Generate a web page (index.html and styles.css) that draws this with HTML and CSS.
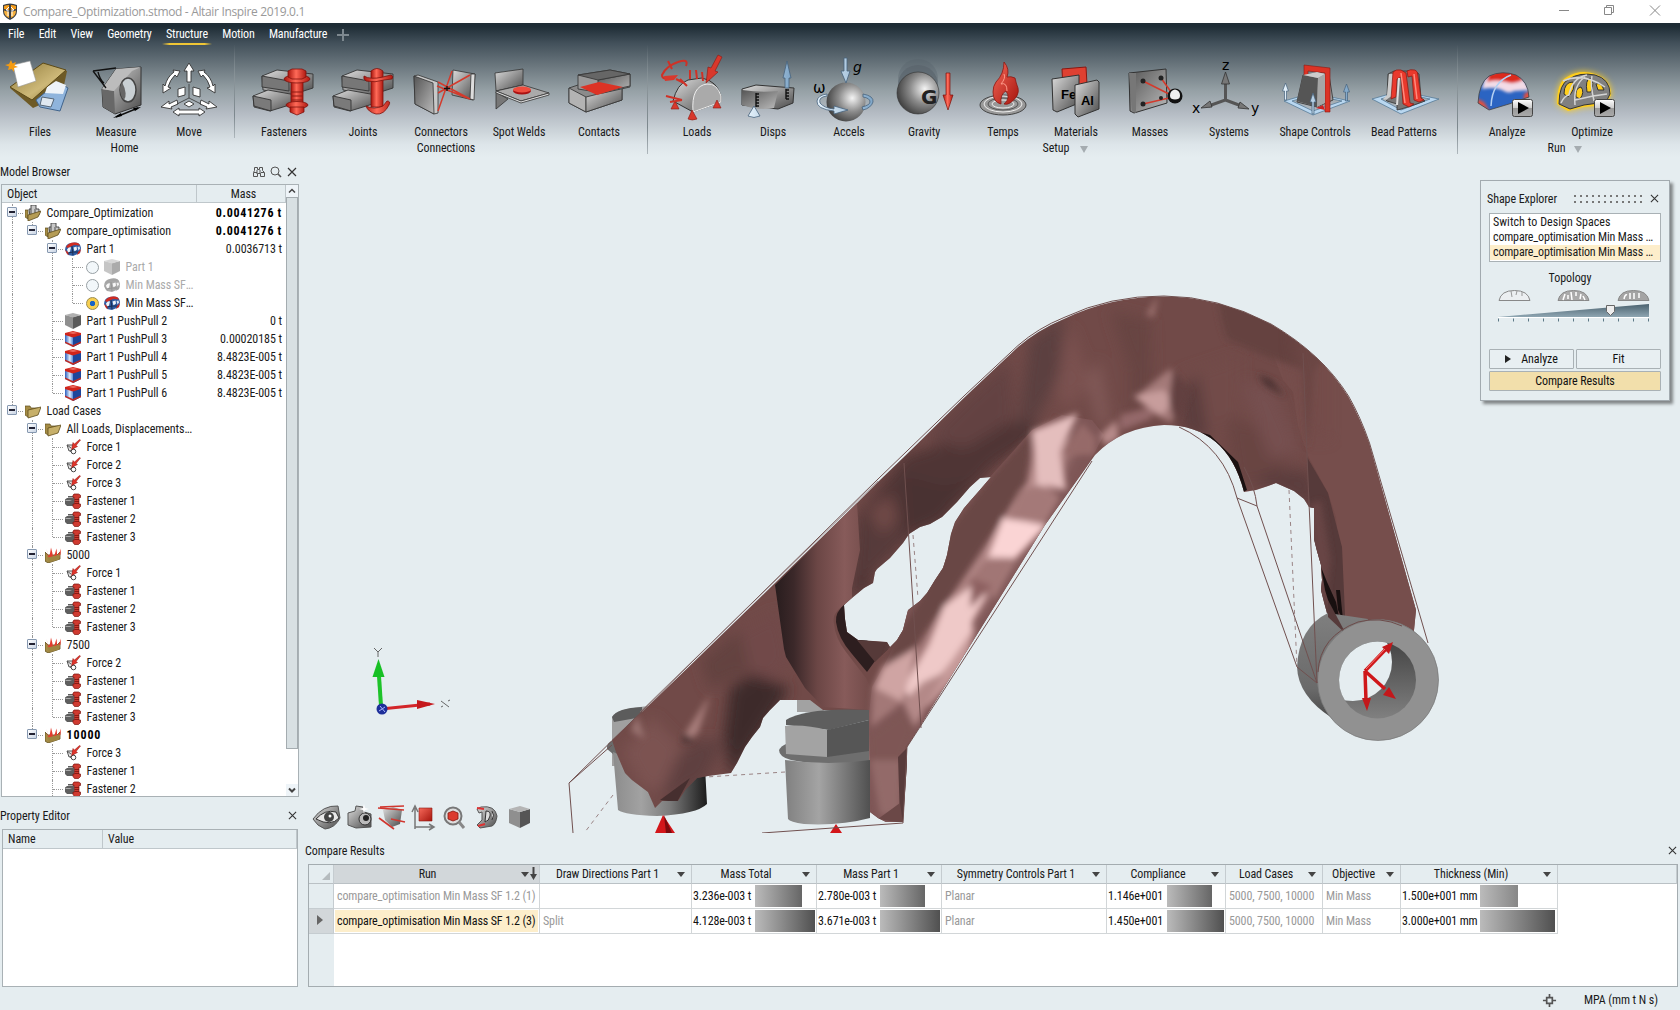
FILE: index.html
```
<!DOCTYPE html>
<html lang="en">
<head>
<meta charset="utf-8">
<title>Compare_Optimization.stmod - Altair Inspire 2019.0.1</title>
<link rel="stylesheet" href="styles.css">
</head>
<body>
<svg class="defs" width="0" height="0" aria-hidden="true">
  <defs>
    <linearGradient id="metal" x1="0" y1="0" x2="1" y2="1"><stop offset="0" stop-color="#ddd"/><stop offset="1" stop-color="#4a4a4a"/></linearGradient>
    <linearGradient id="metal3" x1="0" y1="0" x2="1" y2="1"><stop offset="0" stop-color="#555"/><stop offset="1" stop-color="#bbb"/></linearGradient>
    <linearGradient id="red" x1="0" y1="0" x2="1" y2="0"><stop offset="0" stop-color="#a8140c"/><stop offset=".45" stop-color="#ff6a58"/><stop offset="1" stop-color="#b01a12"/></linearGradient>
    <linearGradient id="redd" x1="0" y1="0" x2="1" y2="1"><stop offset="0" stop-color="#f7695a"/><stop offset="1" stop-color="#a6150d"/></linearGradient>
    <linearGradient id="ice" x1="0" y1="0" x2="1" y2="0"><stop offset="0" stop-color="#e6f2fb"/><stop offset="1" stop-color="#7fa6c8"/></linearGradient>
    <linearGradient id="tan" x1="0" y1="0" x2="1" y2="1"><stop offset="0" stop-color="#8f7a3a"/><stop offset=".6" stop-color="#cdb878"/><stop offset="1" stop-color="#8a7232"/></linearGradient>
    <linearGradient id="play" x1="0" y1="0" x2="0" y2="1"><stop offset="0" stop-color="#fff"/><stop offset=".5" stop-color="#ccc"/><stop offset=".5" stop-color="#999"/><stop offset="1" stop-color="#aaa"/></linearGradient>
    <radialGradient id="ball" cx=".66" cy=".4" r=".7"><stop offset="0" stop-color="#f4f4f4"/><stop offset=".5" stop-color="#8c8c8c"/><stop offset="1" stop-color="#3c3c3c"/></radialGradient>
    <linearGradient id="shieldblue" x1="0" y1="0" x2="1" y2="0"><stop offset="0" stop-color="#2a5fc0"/><stop offset=".3" stop-color="#dfeaf8"/><stop offset=".5" stop-color="#5a8bd8"/><stop offset="1" stop-color="#173f93"/></linearGradient>
    <symbol id="i-cube" viewBox="0 0 16 16"><path d="M0 2 8 4v12l-8-4z" fill="#8f8f8f"/><path d="m16 2-8 2v12l8-4z" fill="#5a5a5a"/><path d="M0 2 8 0l8 2-8 2.400z" fill="#b0b0b0"/></symbol>
    <symbol id="i-shield" viewBox="0 0 16 16"><path d="M0 2 8 4l8-2v10l-8 4-8-4z" fill="url(#shieldblue)"/><path d="M8 5l8-2v9l-8 4z" fill="#1c469b"/><path d="M0 2 8 0l8 2v2L8 6.500 0 4z" fill="#d0241a"/><path d="M3 2 8 .8 13 2 8 3z" fill="#ea6a5e"/><path d="M0 10.500 8 14l8-3.500V12l-8 4-8-4z" fill="#c02a22"/></symbol>
    <symbol id="i-opt" viewBox="0 0 16 16"><path d="M0 9Q0 3 6 2q9-2 10 5l-1 5-7 3-5-1z" fill="#2f5ca3"/><path d="M1 6Q4 1 10 1.500q4 0 5 3L9 4 3 7z" fill="#cf2b22"/><path d="M2 8.500q2-3 4-2l-1 4-2 1.500zM8.500 6.500l3-1 .5 3-2.500 2z" fill="#eef3f9"/><path d="M12.500 6l2-.5.5 2-1.500 2z" fill="#dce6f2"/><path d="M0 9l3 2 1 3-2-1zM13 11l3-3-1 4-3 2z" fill="#c62820"/><path d="m7 5 1 9M3 12l5-1 5 0" stroke="#1b2f55" fill="none"/></symbol>
    <symbol id="i-folder" viewBox="0 0 16 16"><path d="M0 3h5l1 2h7v3L3 14 0 12z" fill="#a58c45" stroke="#5e4d1c" stroke-width=".7"/><path d="M3 7 16 4l-3 8-10 3z" fill="#c7b06a" stroke="#5e4d1c" stroke-width=".8"/></symbol>
    <symbol id="i-asm" viewBox="0 0 16 16"><path d="M0 5h3v9L0 12z" fill="#a58c45" stroke="#5e4d1c" stroke-width=".7"/><path d="M4 4h2V0h5v4h3v6l-9 2z" fill="#c8c8c8" stroke="#3b3b3b" stroke-width=".9"/><path d="M6 4v6M10 4v5" stroke="#444" fill="none" stroke-width=".9"/><path d="M3 10 16 6l-3 6-10 4z" fill="#b59c55" stroke="#5e4d1c" stroke-width=".8"/></symbol>
    <symbol id="i-force" viewBox="0 0 16 16"><path d="M2 6h6l1 5-5 1zM2 6l4 3M5 12l3 2" stroke="#555" fill="#e4e4e4"/><circle cx="8.500" cy="12.500" r="2.300" fill="#fff" stroke="#444"/><path d="m14.500.5-5 4.500-1.500-1.500-1.500 7 6-3-1.500-1 4.500-5.500z" fill="#e0352b" stroke="#8f1510" stroke-width=".5"/></symbol>
    <symbol id="i-fast" viewBox="0 0 16 16"><path d="M3 3h6v10H3zM0 6.500l2-1.500h6v7l-6 1-2-2z" fill="#5e5e5e"/><path d="M0 7h5l2 1H1zM3 4h6v1H3z" fill="#aaa"/><path d="M9 1h4.500l2 1.200v2.300H14V11h1.500v2.500L13.500 15.500h-4L8 13.500V11h1.500V4.500H8V2.200z" fill="#cf3a30" stroke="#79120d" stroke-width=".7"/><path d="M9.500 6.500h4.500M9.500 8.500h4.500M9.500 10.500h4.500" stroke="#79120d" stroke-width=".8"/></symbol>
    <symbol id="i-case" viewBox="0 0 16 16"><path d="M0 5v9l3 2 12-4V5l-3 3H3z" fill="#a58c45" stroke="#5e4d1c" stroke-width=".8"/><path d="M1 1.500l1.500 4 .5 6 2-5 1-6 1.500 6 .5 4 2-4 1.500-5 .5 5 0 3 2.500-4 1.500-4-.5 6-2.500 4-4 2-4-.5z" fill="#e23b2e"/><path d="m3 10.500 12-3-1 5-10 3z" fill="#9d8542"/></symbol>
  </defs>
</svg>

<header class="titlebar">
  <svg class="app-logo" viewBox="0 0 16 17"><path d="M1 2q7-3 14 0v6q0 6-7 9-7-3-7-9z" fill="#3a3f44"/><path d="M2 3q2-1 5-1v5L2 6zM9 2q3 0 5 1v3L9 7z" fill="#f59c1a"/><path d="M2 7.500 7 9v6q-5-2-5-7.500zM14 7.500 9 9v6q5-2 5-7.500z" fill="#f7b13c"/><path d="M7 4 4 7h2v6M9 4l3 3h-2v6" fill="none" stroke="#fff" stroke-width="1"/></svg>
  <span class="window-title">Compare_Optimization.stmod - Altair Inspire 2019.0.1</span>
  <svg class="window-buttons" viewBox="0 0 120 16"><path d="M2 8.500h10M47.500 5.500h7v7h-7zM49.500 5V3.500h7v7H55M93 3.500l10 10m0-10-10 10" fill="none" stroke="#888"/></svg>
</header>

<section class="ribbon">
  <nav class="menu">
    <span>File</span><span>Edit</span><span>View</span><span>Geometry</span><span class="active">Structure</span><span>Motion</span><span>Manufacture</span>
    <svg class="plus" viewBox="0 0 12 12"><path d="M6 0v12M0 6h12" stroke="#7d888f" stroke-width="2"/></svg>
  </nav>
  <div class="groups">
    <div class="group home">
      <div class="tools">
        <div class="tool"><svg viewBox="4 54 72 70"><path d="m10 88 33-25 24 8-5 24-29 13z" fill="#6e5a26"/><path d="m36 100 22-18 10 6-8 23-20-4z" fill="#8fb4dc" stroke="#41648c"/><path d="m47 87 9-6 10 4-3 9-18-1z" fill="#eef3f8"/><path d="m42 97 12 2-3 8-11-2z" fill="#dfe8f1" stroke="#567"/><path d="m10 87 33-24 23 7-34 30z" fill="url(#tan)" stroke="#5c4a18"/><path d="m13 65 17-4 6 20-18 6z" fill="#fff" stroke="#999" stroke-width=".6"/><path d="m11 60 1.500 3.500L16 62l-1.500 3.500L18 67l-4 1 0 4-2.500-3L8 70l1-3.500L5 65l4-1z" fill="#f49b12"/></svg><span>Files</span></div>
        <div class="tool"><svg viewBox="80 54 72 70"><path d="m102 89 14-20 25-2v38l-26 9-12-7z" fill="url(#metal)" stroke="#333"/><path d="m102 89 12 2 1 23-12-7z" fill="#686868"/><path d="m116 69 25-2-9 4-18 20-12-2z" fill="#bcbcbc"/><ellipse cx="128" cy="90" rx="8" ry="12" fill="#c9d0d4" stroke="#444" stroke-width="1.500"/><path d="M122 82q-5 9 2 18 4-6-2-18" fill="#666"/><path d="M93 71l23-3M93 71l13 17M98 72q2 8 6 11" fill="none" stroke="#111" stroke-width="1.300"/><path d="m116 117 22-9" stroke="#111" stroke-width="1.400"/><path d="m113 118 8-5 1 3zM141 107l-8 1 2 3z"/></svg><span>Measure</span></div>
        <div class="tool"><svg viewBox="153 54 72 70"><g fill="#fff" stroke="#333" stroke-width=".9" stroke-linejoin="round"><path d="m189 63 5 8h-3v11h-4V71h-3z"/><path d="m163 93 0-9 2 2q2-9 9-14l-1-2 7 1-3 6-2-2q-5 5-7 12l3 1zM215 93l0-9-2 2q-2-9-9-14l1-2-7 1 3 6 2-2q5 5 7 12l-3 1z"/><path d="m161 107 8-6 0 3 8-4 1 4-7 3 1 2zM217 107l-8-6 0 3-8-4-1 4 7 3-1 2z"/><path d="m173 112 6-4v2h20v-2l6 4-6 4v-2h-20v2z"/><path d="m178 89 7-2v8l-7 2zM193 87l7 2v8l-7-2zM184 104l5-3 5 3-5 3z"/></g><path d="M189 84v14l-12 6M189 98l12 6" fill="none" stroke="#333" stroke-width=".8"/></svg><span>Move</span></div>
      </div>
      <div class="group-name">Home</div>
    </div>
    <div class="group connections">
      <div class="tools">
        <div class="tool"><svg viewBox="248 54 72 70"><g stroke="#333" stroke-width=".9"><path d="m262 76 15-6 36 4v14l-22 7-28-5z" fill="url(#metal)"/><path d="m262 76 27 5v10l-27-4z" fill="#777"/><path d="m253 96 15-6 28 5v8l-26 8-16-4z" fill="url(#metal)"/><path d="m253 96 18 4v11l-17-5z" fill="#7a7a7a"/></g><g fill="url(#red)" stroke="#7e120c" stroke-width=".8"><path d="M291 80h12v28h-12z"/><ellipse cx="297" cy="79" rx="13" ry="4"/><path d="M288 71l4-2h10l4 2v6l-4 2h-10l-4-2z"/><ellipse cx="297" cy="105" rx="11" ry="3.500"/><path d="M290 107h14v5l-7 3-7-3z"/></g><path d="M291 92h12M291 96h12M291 100h12" stroke="#8d1a13"/></svg><span>Fasteners</span></div>
        <div class="tool"><svg viewBox="327 54 72 70"><g stroke="#333" stroke-width=".9"><path d="m342 76 15-6 36 4v14l-22 7-28-5z" fill="url(#metal)"/><path d="m342 76 27 5v10l-27-4z" fill="#777"/><path d="m333 96 15-6 28 5v8l-26 8-16-4z" fill="url(#metal)"/><path d="m333 96 18 4v11l-17-5z" fill="#7a7a7a"/></g><g fill="url(#red)" stroke="#7e120c" stroke-width=".8"><path d="M371 71q6-5 12 0v36h-12z"/><path d="M364 76q6 4 19 1l8-2q3 1 1 4l-8 1q-9 3-18 1-3-2-2-5zM366 106q8 4 17 0l4-5q4 0 2 4-5 10-13 9-8-2-10-8z"/></g></svg><span>Joints</span></div>
        <div class="tool"><svg viewBox="405 54 72 70"><g stroke="#333" stroke-width=".8"><path d="m414 76 4-1 20 7v31l-4 1-19-10z" fill="#c8c8c8"/><path d="m414 76 19 7 1 31-19-10z" fill="url(#metal3)"/><path d="m453 70 22 4-2 26-21-5z" fill="url(#metal)"/><path d="m471 74 4 0-1 26-4-1z" fill="#ddd"/></g><path d="m438 82 32 17M438 93l32-18M438 111l14-40M437 86l33 13" stroke="#d43a2c" stroke-width="1.500"/><path d="M447 86v5M444 88.500h6" stroke="#111" stroke-width="1.300"/></svg><span>Connectors</span></div>
        <div class="tool"><svg viewBox="483 54 72 70"><g stroke="#333" stroke-width=".8"><path d="m496 92 12 7-12 10z" fill="#777"/><path d="m495 73 28-4v16l-27 6z" fill="url(#metal)"/><path d="m496 91 27-6 26 8-28 8z" fill="#aaa"/><path d="m496 91 25 10 28-8v2l-28 8-25-10z" fill="#e0e0e0"/></g><ellipse cx="522" cy="91" rx="9" ry="3.500" fill="#a11"/><ellipse cx="522" cy="89.500" rx="9" ry="3" fill="#ee4d3e"/></svg><span>Spot Welds</span></div>
        <div class="tool"><svg viewBox="563 54 72 70"><g stroke="#3a3a3a" stroke-width=".9"><path d="m569 88 12-4 41 4v12l-36 12-17-9z" fill="#8b8b8b"/><path d="m569 88 17 9v15l-17-9z" fill="#b3b3b3"/><path d="m586 97 36-9v12l-36 12z" fill="url(#metal)"/><path d="m578 75 32-5 20 4v13l-27 6-25-4z" fill="#999"/><path d="m598 80 32-6v12l-32 7z" fill="url(#metal3)"/><path d="m578 75 32-5 20 4-32 6z" fill="#666"/></g><path d="m580 87 19-5 24 5-26 8z" fill="#dc3325"/></svg><span>Contacts</span></div>
      </div>
      <div class="group-name">Connections</div>
    </div>
    <div class="group setup">
      <div class="tools">
        <div class="tool"><svg viewBox="661 54 72 70"><path d="m673 101q4-17 15-21l14-2q15 3 19 18v6l-28 10z" fill="url(#metal)" stroke="#333"/><path d="m693 112q-2-26 14-28 10-1 14 12v6z" fill="#aaa" stroke="#eee"/><g fill="#d8382c" stroke="#8a1710" stroke-width=".6"><path d="m718 55 4 2-7 14 3 1-12 11 2-16 3 1zM692 110l5 9q-5 2-9 0zM675 101l4 8h-8zM717 100l4 8h-8z"/></g><g fill="none" stroke="#cf3126" stroke-width="2"><path d="M686 66q3-8-8-4-12 4-16 13 0 6 12 2M668 61l4 8M676 79l8 4M680 79l7 7M690 70v9M696 70l1 9M702 72l1 9M666 96l16 4M670 102l12-2"/></g><path d="m664 76 14-1-4 5-9 1z" fill="#d8382c"/></svg><span>Loads</span></div>
        <div class="tool"><svg viewBox="737 54 72 70"><path d="m742 89 14-4 38 3-1 15-15 6-36-4z" fill="url(#metal)" stroke="#333"/><path d="M742 90q20 3 36 1l-4 17q-15 3-32-3z" fill="url(#metal3)"/><path d="M756 93v14m0-13h3m-3 3h3m-3 3h3m-3 3h3m-3 3h3M786 89v10m0-9h3m-3 3h3m-3 3h3m-3 3h3" stroke="#111" stroke-width="1.400"/><path d="m787 61 4 17h-2v10h-4V78h-2zM754 106l6 10q-6 3-12 0z" fill="url(#ice)" stroke="#46627c" stroke-width=".8"/></svg><span>Disps</span></div>
        <div class="tool"><svg viewBox="813 54 72 70"><circle cx="846" cy="102" r="19.500" fill="url(#ball)"/><path d="M844 58h3v13h3l-4 12-5-12h3zM827 96q-9 1-7 7 4 5 14 6v-3l14 4-14 4v-3q-18-2-17-10 1-6 10-7zM863 94q11 2 10 8-2 6-10 8l-1-3q8-2 8-5 0-4-7-5z" fill="url(#ice)" stroke="#46627c" stroke-width=".8"/><text class="greek" x="813" y="93">ω</text><text class="grav" x="853" y="72">g</text></svg><span>Accels</span></div>
        <div class="tool"><svg viewBox="888 54 72 70"><ellipse cx="918" cy="79" rx="20" ry="20" fill="#55626a" opacity=".35"/><ellipse cx="918" cy="85" rx="20" ry="20" fill="#59636a" opacity=".6"/><circle cx="918" cy="93" r="21" fill="url(#ball)" stroke="#333" stroke-width=".6"/><text class="gee" x="921" y="104">G</text><path d="M946 73h4v22h3l-5 15-5-15h3z" fill="url(#red)" stroke="#7e120c" stroke-width=".7"/></svg><span>Gravity</span></div>
        <div class="tool"><svg viewBox="967 54 72 70"><ellipse cx="1003" cy="105" rx="23" ry="10" fill="#999" stroke="#444"/><g fill="none" stroke="#eee"><ellipse cx="1003" cy="104" rx="19" ry="8"/><ellipse cx="1003" cy="104" rx="15" ry="6" stroke="#555"/><ellipse cx="1003" cy="104" rx="11" ry="4"/></g><path d="M1004 62q6 7 3 15 4-1 8 1 1 5 3 10 2 8-8 15-3 2-6 1 7-6 2-13-6 3-5 13-8-2-8-12 0-6 3-10 8-8 8-20z" fill="url(#redd)" stroke="#8a1710" stroke-width=".8"/><path d="M1004 74q2 4-3 10 6-2 6 7" fill="none" stroke="#ff9c8c"/></svg><span>Temps</span></div>
        <div class="tool"><svg viewBox="1040 54 72 70"><path d="m1062 69 24-2 1 17-24 6z" fill="#df4031" stroke="#8a1710"/><path d="m1052 79 27-4v28l-22 9-4-2z" fill="url(#metal)" stroke="#333"/><text class="elem" x="1061" y="99">Fe</text><path d="m1075 85 22-5 2 2v27l-21 8-3-3z" fill="url(#metal)" stroke="#333"/><text class="elem" x="1081" y="105">Al</text></svg><span>Materials</span></div>
        <div class="tool"><svg viewBox="1114 54 72 70"><path d="m1129 73 37-4 1 34-33 10-4-2z" fill="url(#metal3)" stroke="#333"/><path d="m1129 73 7 0 0 40-4-2z" fill="#777"/><path d="m1143 81 32 16M1161 78l13 18M1143 104l30-7" stroke="#d43a2c" stroke-width="1.600"/><g fill="#222"><circle cx="1143" cy="81" r="2.500"/><circle cx="1161" cy="78" r="2.500"/><circle cx="1143" cy="104" r="2.500"/><circle cx="1161" cy="98" r="2"/></g><circle cx="1175" cy="96" r="7.500" fill="#111"/><path d="M1175 89.500q-5 1-5 6 0 2 1 3 4 2 8 0 1-1 1-3 0-5-5-6z" fill="#f0f0f0"/></svg><span>Masses</span></div>
        <div class="tool"><svg viewBox="1193 54 72 70"><path d="M1225.500 76v24l-17 6M1225.500 100l16 6" fill="none" stroke="#555" stroke-width="3"/><path d="m1225.500 72 4 12h-8zM1201 108l9-7 2 6zM1249 109l-11-1 2-6z" fill="#777" stroke="#333" stroke-width=".8"/><text class="axis" x="1222" y="70">z</text><text class="axis" x="1192" y="113">x</text><text class="axis" x="1251" y="113">y</text></svg><span>Systems</span></div>
        <div class="tool"><svg viewBox="1279 54 72 70"><path d="m1284 101 28-8 38 8-37 14zM1292 101l20-6 30 6-29 10z" fill="#b9d7f0" fill-rule="evenodd" stroke="#4b718f" stroke-width=".7"/><path d="m1303 75 20-3 6 3 4 25-16 7-20-5z" fill="#999" stroke="#444"/><path d="m1304 65 26 3v44h-5V73l-17-2v4h-4z" fill="#dc3325" stroke="#8a1710" stroke-width=".6"/><path d="m1303 75 15 3-1 29-20-6z" fill="#555"/><path d="m1303 75 14-3 8 2-7 4z" fill="#ccc"/><path d="m1318 78 7-4 0 29-8 4z" fill="#a6a6a6"/><path d="m1316 108 7-3 2 5z" fill="#c22"/><path d="m1285.500 83 3 8h-2v9h-2v-9h-2zM1346.500 84l3 8h-2v9h-2v-9h-2zM1313 93l3 9h-2v12h-2v-12h-2z" fill="url(#ice)" stroke="#46627c" stroke-width=".7"/></svg><span>Shape Controls</span></div>
        <div class="tool"><svg viewBox="1368 54 72 70"><path d="m1372 99 28-8 39 8-38 15zM1381 99l20-6 29 6-29 11z" fill="#b9d7f0" fill-rule="evenodd" stroke="#4b718f" stroke-width=".7"/><path d="m1388 74 6-3h20l5 3 2 24 4 3-14 5-10 3-4 1 0-6-10-3-2-2 2-3z" fill="#777" stroke="#333" stroke-width=".8"/><path d="m1389 74 5 0-1 21-7 5-3-1 4-4z" fill="#ccc"/><path d="M1393 72q3-3 8-2l5 3 4 30 4 1-5 3-6-3-2-27-4 2-1 18-5 2zM1407 71q3-2 8-1 3 1 3 6l3 22 3 2-5 2-5-2-2-24-4 1z" fill="#e9392c" stroke="#8a1710" stroke-width=".7"/><path d="m1401 73 4 30M1414 74l3 25" stroke="#ff8b7d" stroke-width="1.500"/><path d="m1399 78-2 27" stroke="#ddd" stroke-width="2"/></svg><span>Bead Patterns</span></div>
      </div>
      <div class="group-name">Setup <i class="caret"></i></div>
    </div>
    <div class="group run">
      <div class="tools">
        <div class="tool"><svg viewBox="1471 54 72 70"><defs><clipPath id="dome"><path d="M1478 103q1-20 11-27 13-6 27-1 12 6 13 22l-20 7-20 6z"/></clipPath><filter id="domeblur"><feGaussianBlur stdDeviation="1.600"/></filter></defs><g clip-path="url(#dome)"><path d="M1470 65h65v50h-65z" fill="#2b64c2"/><g filter="url(#domeblur)"><path d="m1484 80 10-10h24l12 20-16 1q-5 3-10 0-8-5-22-2z" fill="#f3dbe6"/><path d="m1489 74 10-4h18l6 10q-9 5-17 2-10-3-19 0z" fill="#db2a1d"/><path d="m1476 98 8 4 6 10-14 0zM1531 90l-7 4 0 8 8-4z" fill="#e0503f"/></g><path d="M1491 106q1-24 20-31" fill="none" stroke="#b4d0f2" stroke-width="1.500"/></g><path d="M1478 103q1-20 11-27 13-6 27-1 12 6 13 22l-20 7-20 6z" fill="none" stroke="#444" stroke-width=".8"/><rect x="1512.500" y="99.500" width="20" height="17" rx="2" fill="url(#play)" stroke="#444"/><path d="m1518 102 11 6-11 6z"/></svg><span>Analyze</span></div>
        <div class="tool"><svg viewBox="1556 54 72 70"><path class="glow" d="M1557 104q0-22 10-27 13-8 28-3 16 5 16 21l-6 10-22 2-15 4z" fill="#ffce1c"/><path d="M1559 104q0-20 10-25 11-7 26-4 15 4 15 19l-4 8-22 3-14 4z" fill="#808080" stroke="#333"/><path d="M1564 94q0-12 9-12 3 7-5 15zM1576 97q-1-9 5-10 4 5-1 12zM1587 92q-2-12 3-14 5 4 1 14zM1596 84q5-2 8 6l-6 0z" fill="#ffce1c" stroke="#333"/><path d="M1561 103q3-7 8-8 3-17 18-20M1575 105q-2-20 10-28M1594 101q-4-18-2-25M1563 81q20-9 42 6M1575 100l18-4 14-2" fill="none" stroke="#d4d4d4" stroke-width="1.500"/><rect x="1594.500" y="99.500" width="20" height="17" rx="2" fill="url(#play)" stroke="#444"/><path d="m1600 102 11 6-11 6z"/></svg><span>Optimize</span></div>
      </div>
      <div class="group-name">Run <i class="caret"></i></div>
    </div>
  </div>
</section>

<main class="workspace">
  <aside class="sidebar">
    <div class="panel-title"><span>Model Browser</span>
      <svg class="title-icons" viewBox="0 0 46 14"><g fill="none" stroke="#555"><path d="M2.500 5.500V2.500h3v2h2v-2h3v3l2 2v4h-4v-3h-3v3h-4v-4zM2 7.500h3M9 7.500h3M5 5v4M8 5v4"/><circle cx="23" cy="6" r="4"/><path d="m26 9 3 3" stroke-width="1.600"/><path d="m36 3 8 8m0-8-8 8" stroke="#333" stroke-width="1.200"/></g></svg>
    </div>
    <div class="tree-box">
      <div class="tree-main">
        <div class="tree-head"><span>Object</span><span>Mass</span></div>
        <div class="tree" id="tree"></div>
      </div>
      <div class="scrollbar">
        <svg viewBox="0 0 12 12"><path d="m3 7.500 3-3 3 3" fill="none" stroke="#444" stroke-width="1.500"/></svg>
        <div class="thumb"></div>
        <svg viewBox="0 0 12 12"><path d="m3 4.500 3 3 3-3" fill="none" stroke="#444" stroke-width="2"/></svg>
      </div>
    </div>
    <div class="panel-title prop-title"><span>Property Editor</span><svg class="close" viewBox="0 0 10 10"><path d="m1 1 8 8m0-8L1 9" stroke="#333" stroke-width="1.200"/></svg></div>
    <div class="prop-box"><div class="prop-head"><span>Name</span><span>Value</span></div></div>
  </aside>

  <section class="content">
    <div class="viewport">
      <svg class="scene" viewBox="300 162 1380 671">
        <defs>
          <clipPath id="body"><path clip-rule="evenodd" d="M612 740 643 711 700 656 775 583 857 503 878 482 903 458 965 397 1018 347Q1038 330 1064 319 1110 296.500 1164 296.500 1217 296.500 1271 324.500 1322 354.500 1348 396.500 1360 418 1369 443L1416 610 1413 640 1346 635 1328 617 1324 602 1321 590 1322 580 1321 565 1317 551 1314 539V508L1309 507 1304 499 1294 491 1285 487 1276 483 1268 486 1256 490 1244 492Q1227 425 1164 425 1122 427 1095 455L1045 525 907 747V763L903 822 886 822 878 818 870 812 869 713 823 710 810 700H780L770 710 763 718 760 727 752 737 745 747 737 763 731 773 708 776 697 778 686 789 678 801H662L655 808 648 792 632 780 625 773 616 752zM991 477 980 478 970 487 957 502 942 517 930 524 920 527 909 534 903 543 890 558 877 569 875 572 873 583 864 588 852 598 844 605 845 619 847 632 858 640 873 641 887 642 890 647 897 640 903 630 908 610 920 601 927 593 935 580 943 568 947 555 951 534 955 522 964 508 979 491z"/></clipPath>
          <linearGradient id="col" gradientUnits="userSpaceOnUse" x1="776" y1="0" x2="874" y2="0"><stop offset="0" stop-color="#291d1e"/><stop offset=".18" stop-color="#3b2829"/><stop offset=".42" stop-color="#6b4645"/><stop offset=".7" stop-color="#875b5a"/><stop offset="1" stop-color="#6f4947"/></linearGradient>
          <linearGradient id="cyl" x1="0" y1="0" x2="1" y2="0"><stop offset="0" stop-color="#8c8c8c"/><stop offset=".3" stop-color="#a2a2a2"/><stop offset=".6" stop-color="#7c7c7c"/><stop offset="1" stop-color="#1c1c1c"/></linearGradient>
          <linearGradient id="cyl2" x1="0" y1="0" x2="1" y2="0"><stop offset="0" stop-color="#808080"/><stop offset=".4" stop-color="#a4a4a4"/><stop offset="1" stop-color="#505050"/></linearGradient>
          <linearGradient id="tube" x1="0" y1="0" x2="0" y2="1"><stop offset="0" stop-color="#7f7f7f"/><stop offset=".6" stop-color="#6a6a6a"/><stop offset="1" stop-color="#333"/></linearGradient>
          <linearGradient id="bore" x1="0" y1="0" x2="0" y2="1"><stop offset="0" stop-color="#444"/><stop offset="1" stop-color="#808080"/></linearGradient>
          <clipPath id="hole"><circle cx="1377.500" cy="680" r="38.500"/></clipPath>
          <filter id="soft" x="-30%" y="-30%" width="160%" height="160%"><feGaussianBlur stdDeviation="7"/></filter>
          <filter id="soft2" x="-30%" y="-30%" width="160%" height="160%"><feGaussianBlur stdDeviation="3.200"/></filter>
        </defs>
        <!-- left bolt -->
        <path d="M612 717q5-9 40-11v60h-40z" fill="#a0a0a0"/><path d="M612 717q5-9 30-10v10l-28 5z" fill="#5c5c5c"/>
        <path d="M607 746q3-8 14-5l80 30v10q-60 0-94-32z" fill="#6b6b6b"/>
        <path d="M613 752q40 18 92 15l2 37q-10 10-50 12-32-1-39-6z" fill="url(#cyl)"/>
        <!-- right bolt shank behind the strut -->
        <path d="M797 698h16l12 14h-28z" fill="#a2a2a2"/>
        <g clip-path="url(#body)">
          <rect x="560" y="280" width="880" height="560" fill="#714a48"/>
          <g filter="url(#soft)">
            <path d="M905 455 1035 415 1035 440 995 465 942 520 909 536 875 572 870 590 850 600 858 515z" fill="#4f3536"/>
            <path d="m965 398 45-40 5 60-50 30-40-10z" fill="#644342"/>
            <path d="m1030 340 34-25-5 60-25 50-15-10z" fill="#5c3f40"/>
            <path d="M909 536l-4-60 38 10 30-5-30 40z" fill="#4a3132"/>
            <path d="M860 575l5-60 28-20 10 40-30 40z" fill="#563a3a"/>
            <path d="m868 512 22-18 8 25-15 15z" fill="#6f4a47"/>
            <path d="m1070 325 20 55-20 30-15-20z" fill="#7a5150"/>
            <path d="m1085 380 15-20 10 60-10 10z" fill="#805856"/>
            <path d="m1110 310 20 60 0 50 22-30-2-70z" fill="#674543"/>
            <path d="m1180 375 60-20 0 60-30 30-20-30z" fill="#724c4a"/>
            <path d="m1182 430-3-40 20-15 10 60-8 5z" fill="#5b3d3d"/>
            <path d="m1225 415 40 15 25 30-20 20-35 5z" fill="#694543"/>
            <path d="m1250 485 20-15 40 0 10 40-25-12-20-10z" fill="#5c3e3e"/>
            <path d="m1240 380 35 10 25 60-30 10z" fill="#765050"/>
            <path d="m740 630 40-20 10 50-20 25-30-10z" fill="#714a49"/>
            <path d="m700 660 40-30 10 40-40 20z" fill="#634241"/>
            <path d="M730 688 752 674 790 688 768 722 731 778 724 735z" fill="#3c292a"/>
            <path d="m655 780 40-40 30 0-20 40-40 20z" fill="#5e4040"/>
            <path d="m622 752 30-35 30 30-20 45-20-5z" fill="#7b5251"/>
          </g>
          <path d="M1217 300q3 25 10 40l46 15 10 25 10 12 5 34 10 30 20 37 8 24 8 100 80 20V440L1360 370 1280 300z" fill="#764e4c"/>
          <path d="M1217 295q3 30 10 45l36 15 40 15 5 80 6-80 10-10-25-30-50-37z" fill="#654341" filter="url(#soft2)"/>
          <path d="M1290 330h40v110h-20z" fill="#734c4a" opacity=".5" filter="url(#soft)"/>
          <path d="m1258 374 14 6 13 17-20-12z" fill="#4c3231" filter="url(#soft2)"/>
          <path d="m1307 457 21 36 14 54 4 90-26-20-10-110z" fill="#563a3a"/>
          <path d="m1321 500 10 60-4 30 10 25-20-20-8-90z" fill="#684544" filter="url(#soft2)"/>
          <path d="m1321 567 6 15 9 20 6 30-8-12-9-30zM1336 590l4 0 3 30-5-10z" fill="#181010"/>
          <path d="m1182 427 28 8 28 27 9 28-6 3-15-36-14-16z" fill="#1a1111"/>
          <path d="M1196 434q32 20 46 58" fill="none" stroke="#4d3433" stroke-width="1.500"/>
          <path d="M775 585 857 503l3 47-8 38v10l-14 12q-6 6-4 14 1 14 12 28l20 26 6 12-3 20-46-3-18-19-19-31-2-8z" fill="url(#col)"/>
          <path d="M845 604q-10 8-9 18 2 16 16 32l15 18 8-11 13-12-16-6-16-9-9-9z" fill="#2d1e1f"/>
          <path d="m857 640 30 2 3 5-15 15z" fill="#563a39"/>
          <!-- front strut -->
          <path d="M869 713l3-26 11-20 14-27 6-20 5-10 19-17 20-33 8-37 17-26 60-67 30-15 30 5 12 15-109 200-90 112-2 80h-36z" fill="#7e5656"/>
          <g filter="url(#soft)"><path d="m1050 440 25 0-45 95-70 100-45 60-10-20 40-70 40-60 35-60z" fill="#b98e8d"/></g>
          <g filter="url(#soft2)">
            <path d="m953 525 38-48 40-45-5 50-40 60-40 60-50 70-14 5 10-35 30-45z" fill="#694644"/>
            <path d="m1032 431 46-18-18 39 6 38-20-5-9 10-3-45z" fill="#e4bebd"/>
            <path d="m1062 453 20-30 14 15-1 17-25 0z" fill="#966a69"/><path d="m1100 435 16-15 3 18-14 8z" fill="#b68a89"/>
            <path d="m1120 415 40-10-10 14-30 12z" fill="#94696a"/>
            <path d="m1003 518 44 7-32 33-27-1z" fill="#fad4d4"/>
            <path d="m1020 490 20-5 20 12-15 26-38-4z" fill="#a47978"/>
            <path d="m985 560 30-2-20 40-18-15-30 24z" fill="#a17675"/>
            <path d="m944 606 30-22 12 12-14 25 0 15-24 44-38 22-6-15 25-42z" fill="#efc9c8"/>
            <path d="m952 660 24-35-10 42-38 40-10-5z" fill="#c59998"/>
            <path d="m972 578 20 8-22 22z" fill="#8d6160"/>
            <path d="m883 667 34-20-14 55-30-12z" fill="#cfa4a3"/>
            <path d="m873 687 30 15-32 25z" fill="#a37877"/>
            <path d="m903 702 20-20 22-10-30 55z" fill="#b48988"/>
            <path d="m869 735 35-25 10 20-12 30-32 0z" fill="#7e5655"/>
            <path d="m870 760h32l-2 55-20 0z" fill="#936a69"/>
            <path d="m1171 368-36 29 17 15 19 11 8-20z" fill="#a47a79"/><path d="m1133 396 31-6 9 12-12 14z" fill="#c79d9c"/><path d="m1173 370 18 22-15 34-7-24z" fill="#62413f"/>
            <path d="m1146 315 12-20-4 22z" fill="#9a6f6d"/>
            <path d="m684 735 26-40-12 38-8 6z" fill="#a87e7c"/><path d="m637 715 8 24-14-8z" fill="#9a7371"/>
            <path d="m684 733 12 8-14 2z" fill="#4a3031"/>
          </g>
          <path d="m898 757 10-10v16l-5 58-3 0z" fill="#583b3b"/>
          <path d="m878 819 22-16 3 20z" fill="#6b4847"/>
          <path d="m690 778-30 22 17 2z" fill="#462f2f"/>
        </g>
        <!-- right bolt -->
        <path d="M779 750q4-8 20-8l70 4v16q-45 5-78-2-12-3-12-10z" fill="#6e6e6e"/>
        <path d="M785 760q45 6 85 0v58q-30 8-66 6-14-2-16-5z" fill="url(#cyl2)"/>
        <path d="M786 720q20-13 83-10v10l-40 10-43-5z" fill="#5e5e5e"/><path d="M785 726q20-2 42 4v27l-41-3z" fill="#a3a3a3"/><path d="m827 730 42-10v31l-42 6z" fill="#565656"/>
        <path d="m663 815 12 18h-20zM836 824l6 9h-12z" fill="#d3161a"/><path d="m664 815 2 18h6z" fill="#7d0a0d"/>
        <!-- tube -->
        <path d="M1297 667q2-40 31-54l40 6 0 120-36-21q-34-22-35-51z" fill="url(#tube)"/>
        <path d="m1328 600 18 34-18-17z" fill="#563a3a"/>
        <circle cx="1378" cy="680" r="60.500" fill="#919191" stroke="#777" stroke-width=".7"/>
        <circle cx="1377.500" cy="680" r="38.500" fill="url(#bore)"/>
        <circle cx="1353" cy="662" r="39" fill="#e5edf0" clip-path="url(#hole)"/>
        <path d="M1318 672q2-36 40-50 22-6 44 4" fill="none" stroke="#6d4b4a"/>
        <g stroke="#cf171a" stroke-width="3.500" fill="#c3181b"><path d="M1365 671l22-23M1365 671l1 30M1365 671l20 18" /><path stroke="none" d="m1393 642-4 12-7-7zM1367 711l-5-13h9zM1396 699l-13-4 6-8z"/></g>
        <path d="m1366 669 19-20" stroke="#f47a76"/>
        <!-- design-space wireframe -->
        <g fill="none" stroke="#70504f" stroke-width="1">
          <path d="M573 833 569 783 878 479 965 395 1018 345.500Q1038 328 1064 317.500 1110 295.500 1164 296q53 0 107 28 51 30 77.500 72 12 21 21 47L1428 643M569 783l43-38M1092 461 907 747l-4 76-141 10M904 463l17 265"/>
          <path d="M1179 427q45 20 58 71l60 169 20 16M1237 498l20 8 60 177M1244 467q11 20 13 39M1303 353l5 127 9 203"/>
          <path stroke-dasharray="4 4" stroke="#9a8485" d="m913 535 5 63M785 772l-79 5M613 795l-28 37M1289 490l8 177"/>
        </g>
        <path d="M640 712 878 481" stroke="#8b7273" stroke-width=".7"/>
        <!-- axis triad -->
        <g><path d="M381 709 430 704" stroke="#d3262a" stroke-width="3"/><path d="m435 704-18-4v9z" fill="#c5191d"/><path d="m381 706-2-30" stroke="#1ec32a" stroke-width="4"/><path d="m378.500 659-6 18h12z" fill="#17c024"/><circle cx="382" cy="709" r="5.500" fill="#1e2f9a"/><path d="m379 711 6-4m-5-1 5 6" stroke="#aab4ff"/><path d="m374 648 4 4 4-4m-4 4v5M441 701l8 6m-8 0 2-1m5-5 2-1" fill="none" stroke="#666"/></g>
      </svg>
      <svg class="view-tools" viewBox="312 803 222 28">
        <path d="M313 819q10-14 25-13l2 12q-5 10-15 11-8-3-12-10z" fill="url(#metal)" stroke="#555"/><path d="M316 819q9-10 20-7l3 6q-8 9-23 1z" fill="#e8e8e8" stroke="#333"/><circle cx="329" cy="817" r="5" fill="#444"/><circle cx="330" cy="816" r="1.500" fill="#fff"/>
        <path d="m348 813 7-2 1-5 7 1 1 5 7 2v13l-15 1-8-3z" fill="url(#metal)" stroke="#555"/><circle cx="365" cy="819" r="6" fill="#bbb" stroke="#333"/><circle cx="366" cy="818" r="3" fill="#222"/><path d="m364 804 1 4 4 1-4 1-1 4-1-4-4-1 4-1z" fill="#fff"/>
        <path d="m383 810 10-3 9 3-2 14-8 3-7-7z" fill="url(#metal)"/><path d="m378 808 26 2M380 807l24-1M379 818l15 11M391 819l14 3" stroke="#d1372f" stroke-width="1.600"/>
        <path d="M415 829V808m-3 4 3-6 3 6M415 827h18m-4-3 5 3-5 3" fill="none" stroke="#777" stroke-width="1.500"/><path d="M419 808h13v13h-13z" fill="url(#redd)" stroke="#8a1710" stroke-width=".6"/>
        <circle cx="453" cy="816" r="8.500" fill="#ddd" stroke="#777" stroke-width="2"/><path d="m459 822 5 6" stroke="#888" stroke-width="3"/><path d="m448 813 5-2 5 2v6l-5 2-5-2z" fill="#dc3a2e" stroke="#8a1710" stroke-width=".8"/>
        <path d="M477 809l4-2q14-2 16 9-1 8-5 10l-12 2-3-3 5-5 0-8-3 1z" fill="url(#metal)" stroke="#555"/><path d="M486 811q5 0 4 5-1 5-5 6zM492 811q3 4 0 9" fill="#ddd" stroke="#333"/><path d="m477 808 7 1M478 826l7-2" fill="none" stroke="#d33" stroke-width="2"/>
        <path d="m509 809 11 3v16l-11-5z" fill="#8f8f8f"/><path d="m520 812 10-3v14l-10 5z" fill="#555"/><path d="m509 809 11-3 10 3-10 3z" fill="#b5b5b5"/>
      </svg>

      <section class="explorer">
        <div class="explorer-head"><span>Shape Explorer</span><i class="grip"></i><svg class="close" viewBox="0 0 10 10"><path d="m1 1 8 8m0-8L1 9" stroke="#333" stroke-width="1.200"/></svg></div>
        <div class="run-list"><span>Switch to Design Spaces</span><span>compare_optimisation Min Mass <i class="dots">...</i></span><span class="selected">compare_optimisation Min Mass <i class="dots">...</i></span></div>
        <div class="topology">Topology</div>
        <svg class="slider" viewBox="1490 289 168 34">
          <defs><linearGradient id="wedge" x1="0" y1="0" x2="0" y2="1"><stop offset="0" stop-color="#4a616e"/><stop offset="1" stop-color="#8fa6b2"/></linearGradient></defs>
          <path d="M1499 300.500q2-10 15.500-10t15.500 10z" fill="#eceff1" stroke="#888"/><path d="m1511 291 1 6M1517 291l-1 4M1522 292l0 4" stroke="#999"/>
          <path d="M1558 300.500q2-10 15.500-10t15.500 10z" fill="#aaa" stroke="#888"/><path d="m1565 294-2 6M1571 292l1 8M1576 292v4M1580 299l1-5M1568 299v-4M1585 300l-2-4" stroke="#fff" stroke-width="1.500"/>
          <path d="M1618 300.500q2-10 15.500-10t15.500 10z" fill="#a4a4a4" stroke="#888"/><path d="M1624 299q1-5 3-4M1630 293v6M1634 293v6M1639 293v5" fill="none" stroke="#fff" stroke-width="1.500"/>
          <path d="m1498 317 151-13v13z" fill="url(#wedge)"/><path d="M1498 317.500h151" stroke="#fff"/>
          <path d="M1498.500 318.500v3m15-3v3m15-3v3m15-3v3m15-3v3m15-3v3m15-3v3m15-3v3m15-3v3m15-3v3m15-3v3" stroke="#5c7886"/>
          <path d="M1606.500 305.500h8v6l-4 4-4-4z" fill="#eee" stroke="#666"/>
        </svg>
        <div class="explorer-buttons"><button><i class="play"></i>Analyze</button><button>Fit</button><button class="compare">Compare Results</button></div>
      </section>
    </div>

    <div class="results-title"><span>Compare Results</span><svg class="close" viewBox="0 0 10 10"><path d="m1 1 8 8m0-8L1 9" stroke="#333" stroke-width="1.200"/></svg></div>
    <div class="results-box" id="results"></div>
    <footer class="status"><svg viewBox="0 0 16 16"><path d="M8 1v4m0 6v4M1 8h4m6 0h4M5 5h6v6H5z" fill="none" stroke="#555" stroke-width="1.800"/></svg><span>MPA (mm t N s)</span></footer>
  </section>
</main>
<script src="app.js"></script>
</body>
</html>
```
FILE: styles.css
```
* { box-sizing: border-box; }
body {
  margin: 0; width: 1680px; height: 1010px; overflow: hidden;
  display: flex; flex-direction: column;
  background: #e5edf0; color: #1a1a1a;
  font-family: Roboto, "Liberation Sans", sans-serif; font-size: 12px; font-stretch: 75%; line-height: 14px; letter-spacing: -.06px;
  white-space: nowrap;
}
svg { display: block; }
.defs { position: absolute; }
i { font-style: normal; }

.titlebar { height: 23px; flex: none; background: #fff; display: flex; align-items: center; padding: 0 3px 0 2px; }
.app-logo { width: 16px; height: 17px; }
.window-title { flex: 1; margin-left: 5px; padding-top: 1px; color: #999; font: 12px/16px "Open Sans", sans-serif; font-stretch: 100%; letter-spacing: -.34px; }
.window-buttons { width: 120px; height: 16px; margin-top: -3px; }

.ribbon {
  height: 139px; flex: none; display: flex; flex-direction: column;
  background: linear-gradient(#1e2c35 0, #1e2c35 3px, #42505a 20px, #6b777e 43px, #96a1a6 68px, #b4bbc3 90px, #cdd5da 109px, #dde5e9 121px, #e5edf0 134px);
}
.menu { display: flex; height: 22px; color: #fff; padding-left: 8px; letter-spacing: -.16px; }
.menu span { line-height: 22px; margin-right: 14.400px; }
.menu .active { position: relative; }
.menu .active::after { content: ""; position: absolute; left: -4px; right: -4px; bottom: 0; height: 2px; background: linear-gradient(90deg, #ecc33000, #f0c635 15%, #f0c635 85%, #ecc33000); }
.plus { width: 12px; height: 12px; margin: 6px 0 0 -5px; }
.groups { display: flex; height: 117px; }
.group { border-right: 1px solid; border-image: linear-gradient(#70808800, #8a9499 40%, #7c878d 75%, #b0b9be) 1; height: 109px; }
.group.home { width: 235px; height: 93px; }
.connections { width: 413px; }
.setup { width: 810px; }
.run { flex: 1; border: 0; }
.tools { display: grid; justify-items: end; padding-top: 9px; height: 96px; }
.home .tools { grid-template-columns: 76px 76px 73px; }
.connections .tools { grid-template-columns: 85px 79px 78px 78px 80px; }
.setup .tools { grid-template-columns: 85px 76px 76px 75px 79px 73px 74px 79px 86px 89px; }
.run .tools { grid-template-columns: 85px 85px; }
.tool { width: 72px; display: flex; flex-direction: column; align-items: center; }
.tool svg { width: 72px; height: 70px; overflow: visible; flex: none; }
.tool span { margin-top: 1px; }
.group-name { display: flex; justify-content: center; align-items: center; gap: 11px; height: 14px; }
.home .group-name { padding-left: 15px; }
.connections .group-name { padding-left: 10px; }
.setup .group-name { padding-left: 26px; }
.run .group-name { padding-right: 8px; gap: 9px; }
.caret { border: 4.5px solid transparent; border-top: 7px solid #a5acb0; border-bottom: 0; margin-top: 2px; }
.greek { font: 15px "DejaVu Sans"; }
.grav { font: italic 14px "DejaVu Sans"; }
.gee { font: bold 20px "DejaVu Sans"; fill: #222; }
.elem { font: bold 13px "Liberation Sans"; }
.axis { font: 14px "DejaVu Sans"; }
.glow { filter: drop-shadow(0 0 3px #ffce1c); }

.workspace { flex: 1; display: flex; min-height: 0; }
.sidebar { width: 300px; display: flex; flex-direction: column; padding-left: 1px; }
.panel-title { height: 22px; display: flex; justify-content: space-between; align-items: center; padding: 0 3px 3px 0; }
.panel-title span { margin-left: -1px; }
.title-icons { width: 46px; height: 14px; margin-right: -1px; }
.close { width: 9px; height: 9px; fill: none; }
.tree-box { height: 613px; width: 298px; border: 1px solid #a9b1b5; background: #fff; display: flex; }
.tree-main { width: 284px; display: flex; flex-direction: column; overflow: hidden; }
.tree-head { height: 18px; flex: none; display: grid; grid-template-columns: 195px 89px; background: #e5edf0; border-bottom: 1px solid #bfc7cb; }
.tree-head span { line-height: 18px; padding-left: 5px; border-right: 1px solid #bfc7cb; }
.tree-head span + span { text-align: center; padding: 0 0 0 5px; }
.tree { padding-top: 1px; }
.row { display: flex; height: 18px; align-items: center; padding-right: 4px; }
.row .cell { width: 20px; height: 18px; flex: none; position: relative; }
.cell.line::before, .cell.half::before { content: ""; position: absolute; left: 10px; top: 0; height: 18px; border-left: 1px dotted #999; }
.cell.half::before { height: 9px; }
.cell.tee::after { content: ""; position: absolute; left: 11px; top: 9px; width: 10px; border-top: 1px dotted #999; }
.expander { position: absolute; z-index: 1; left: 5px; top: 3px; width: 10px; height: 10px; border: 1px solid #8698b0; border-radius: 1px; background: linear-gradient(135deg, #fff, #c9d4e4); }
.expander::after { content: ""; position: absolute; left: 1px; top: 3px; width: 6px; height: 2px; background: #223; }
.row > svg { width: 16px; height: 16px; flex: none; margin: -1px 5.500px 0 3px; }
.radio { width: 13px; height: 13px; border: 1px solid #98a0a4; border-radius: 50%; background: #f2f7fa; margin: 0 2px 0 4px; }
.radio.on { border: 1px solid #9c8b4a; background: radial-gradient(circle, #1763c6 0 2.4px, #f7cf51 3px); }
.row.dim { color: #aaa; }
.row.dim svg { opacity: .5; filter: grayscale(1); }
.row .mass { margin-left: auto; }
.bold { font-weight: bold; color: #000; letter-spacing: .9px; }
.mass.bold { letter-spacing: .7px; }
.dots { letter-spacing: -.8px; }
.scrollbar { width: 12px; display: flex; flex-direction: column; background: #fff; }
.scrollbar svg { width: 12px; height: 12px; background: #eef4f8; }
.thumb { height: 552px; background: #d8e0e3; border: 1px solid #a4acb0; margin-bottom: auto; }
.prop-title { margin-top: 9px; height: 23px; padding-bottom: 4px; }
.prop-box { width: 296px; height: 158px; border: 1px solid #a9b1b5; background: #fff; margin: 0 0 0 1px; }
.prop-head { display: grid; grid-template-columns: 100px 194px; height: 19px; background: #e5edf0; border-bottom: 1px solid #bfc7cb; }
.prop-head span { padding-left: 5px; line-height: 18px; border-right: 1px solid #bfc7cb; }

.content { flex: 1; display: flex; flex-direction: column; }
.viewport { height: 671px; position: relative; }
.scene { width: 1380px; height: 671px; }
.view-tools { position: absolute; left: 12px; top: 641px; width: 222px; height: 28px; }
.explorer { position: absolute; left: 1180px; top: 18px; width: 190px; height: 221px; background: #e5edf0; border: 1px solid #a2aaaf; box-shadow: 3px 3px 3px #00000070; padding: 8px 8px 0; }
.explorer-head { display: flex; align-items: center; height: 20px; padding: 0 2px 0 0; margin-left: -2px; }
.explorer-head .close { margin-top: -2px; }
.grip { width: 72px; height: 12px; margin: -1px 6px 0 auto; background: radial-gradient(circle, #777 0 1px, transparent 1.3px) 0 0 / 6px 6px; }
.run-list { margin-top: 4px; width: 172px; height: 49px; border: 1px solid #a9b1b5; background: #fff; display: flex; flex-direction: column; padding-top: 1px; letter-spacing: -.16px; }
.run-list span { line-height: 15px; padding-left: 3px; }
.run-list span:first-child { letter-spacing: .05px; }
.run-list .selected { background: #fdeecb; }
.topology { text-align: center; padding-right: 10px; margin-top: 9px; }
.slider { width: 168px; height: 34px; margin-top: 4px; margin-left: 1px; }
.explorer-buttons { display: grid; grid-template-columns: 85px 85px; grid-auto-rows: 20px; gap: 2px; margin-top: 26px; }
button { font: inherit; font-stretch: 75%; letter-spacing: inherit; color: #111; background: #e8eff2; border: 1px solid #a9b1b5; border-radius: 1px; padding: 0; }
.compare { grid-column: 1 / 3; background: #f2dfab; }
.play { display: inline-block; border: 4px solid transparent; border-left: 6px solid #222; border-right: 0; margin-right: 10px; }

.results-title { height: 31px; padding: 5px 3px 0 5px; display: flex; justify-content: space-between; align-items: center; }
.results-title .close { margin-top: -2px; }
.results-box { margin-left: 8px; width: 1370px; height: 123px; border: 1px solid #a4acb0; background: linear-gradient(90deg, #e5edf0 25px, #fff 25px); }
.grid { display: grid; grid-template-columns: 25px 206px 152px 125px 125px 165px 119px 97px 78px 157px 1fr; letter-spacing: -.12px; }
.th { height: 19px; background: #e5edf0; border-right: 1px solid #c5ccd0; border-bottom: 1px solid #bac1c5; display: flex; align-items: center; justify-content: center; padding-right: 4px; }
.th:last-child { border-right: 0; }
.th span { flex: 1; text-align: center; padding-right: 7px; padding-left: 5px; }
.th.sorted { background: #d2d7da; padding-right: 2px; }
.th.sorted span { padding-right: 9px; padding-left: 9px; }
.th.corner { align-items: end; justify-content: end; }
.corner::after { content: ""; border: 4px solid transparent; border-right-color: #b5bbbe; border-bottom-color: #b5bbbe; margin: 0 -1px 3px; }
.filter { border: 4px solid transparent; border-top: 5px solid #444; border-bottom: 0; }
.th .filter { margin-right: 2px; }
.th.sorted .filter { margin-right: 1px; }
.sort { width: 7px; height: 14px; fill: #444; }
.td { height: 25px; border-right: 1px solid #d2d6d8; border-bottom: 1px solid #d2d6d8; display: flex; align-items: center; color: #999; padding-left: 3px; overflow: hidden; }
.td.num { color: #111; padding-left: 1px; justify-content: space-between; }
.td.num span { margin-top: -1px; }
.td.side { background: #e5edf0; border-bottom: 1px solid #c5ccd0; border-right: 1px solid #c5ccd0; }
.td.side.current { background: #d2d7da; }
.current i { margin-left: 5px; margin-top: -3px; border: 5px solid transparent; border-left: 6px solid #666; border-right: 0; }
.td.picked { color: #111; background: #fdeecb; box-shadow: inset 0 0 0 1px #fff; }
.track { flex: none; }
.bar { height: 22px; background: linear-gradient(90deg, #bbb, #666); }
.bar.mid { background: linear-gradient(90deg, #bbb, #878787); }
.bar.full { background: linear-gradient(90deg, #bbb, #505050); }
.track-mass { width: 61px; }
.track-comp { width: 58px; }
.track-thick { width: 77px; }
.status { flex: 1; display: flex; align-items: center; justify-content: flex-end; gap: 27px; padding: 3px 22px 0 0; }
.status svg { width: 15px; height: 15px; }
```
FILE: app.js
```
// guides: one character per 20px indent cell
//   | line, T tee, L last child, e expander with siblings below, x last expander
const fasteners = (g, last) => [1, 2, 3].map(n => [g + (n === 3 ? last : 'T'), 'fast', 'Fastener ' + n]);
const rows = [
  ['e', 'asm', 'Compare_Optimization', '0.0041276 t', 'massbold'],
  ['|x', 'asm', 'compare_optimisation', '0.0041276 t', 'massbold'],
  ['| e', 'opt', 'Part 1', '0.0036713 t'],
  ['| |T', 'cube', 'Part 1', '', 'dim', 'off'],
  ['| |T', 'opt', 'Min Mass SF...', '', 'dim', 'off'],
  ['| |L', 'opt', 'Min Mass SF...', '', '', 'on'],
  ['| T', 'cube', 'Part 1 PushPull 2', '0 t'],
  ['| T', 'shield', 'Part 1 PushPull 3', '0.00020185 t'],
  ['| T', 'shield', 'Part 1 PushPull 4', '8.4823E-005 t'],
  ['| T', 'shield', 'Part 1 PushPull 5', '8.4823E-005 t'],
  ['| L', 'shield', 'Part 1 PushPull 6', '8.4823E-005 t'],
  ['x', 'folder', 'Load Cases'],
  [' e', 'folder', 'All Loads, Displacements...'],
  [' |T', 'force', 'Force 1'],
  [' |T', 'force', 'Force 2'],
  [' |T', 'force', 'Force 3'],
  ...fasteners(' |', 'L'),
  [' e', 'case', '5000'],
  [' |T', 'force', 'Force 1'],
  ...fasteners(' |', 'L'),
  [' e', 'case', '7500'],
  [' |T', 'force', 'Force 2'],
  ...fasteners(' |', 'L'),
  [' x', 'case', '10000', '', 'labelbold'],
  ['  T', 'force', 'Force 3'],
  ...fasteners('  ', 'T').slice(0, 2),
];
const cellClass = { '|': 'line', 'T': 'line tee', 'L': 'half tee', 'e': 'line tee', 'x': 'half tee', ' ': '' };
document.getElementById('tree').innerHTML = rows.map(([guides, icon, label, mass = '', kind = '', radio = '']) => {
  const cells = [...guides].map(c =>
    `<span class="cell ${cellClass[c]}">${c === 'e' || c === 'x' ? '<i class="expander"></i>' : ''}</span>`).join('');
  const text = label.replace('...', '<i class="dots">...</i>');
  return `<div class="row ${kind === 'dim' ? 'dim' : ''}">${cells}` +
    (radio ? `<i class="radio ${radio}"></i>` : '') +
    `<svg><use href="#i-${icon}"/></svg><span class="${kind === 'labelbold' ? 'bold' : ''}">${text}</span>` +
    (mass ? `<span class="mass ${kind === 'massbold' ? 'bold' : ''}">${mass}</span>` : '') + '</div>';
}).join('');

const columns = ['Run', 'Draw Directions Part 1', 'Mass Total', 'Mass Part 1', 'Symmetry Controls Part 1',
  'Compliance', 'Load Cases', 'Objective', 'Thickness (Min)'];
const bar = (text, track, width, tone) => `<div class="td num"><span>${text}</span><div class="track track-${track}"><div class="bar ${tone}" style="width:${width}px"></div></div></div>`;
const cell = text => `<div class="td">${text}</div>`;
document.getElementById('results').innerHTML = '<div class="grid"><div class="th corner"></div>' +
  columns.map((c, i) => `<div class="th ${i ? '' : 'sorted'}"><span>${c}</span><i class="filter"></i>${i ? '' : '<svg class="sort" viewBox="0 0 7 14"><path d="M2.500 0h2v7h2.500l-3.500 6-3.500-6h2.500z"/></svg>'}</div>`).join('') +
  '<div class="th"></div>' +
  '<div class="td side"></div>' + cell('compare_optimisation Min Mass SF 1.2 (1)') + cell('') +
  bar('3.236e-003 t', 'mass', 47, '') + bar('2.780e-003 t', 'mass', 45, '') + cell('Planar') +
  bar('1.146e+001', 'comp', 45, '') + cell('5000, 7500, 10000') + cell('Min Mass') + bar('1.500e+001 mm', 'thick', 38, 'mid') + '<div></div>' +
  '<div class="td side current"><i></i></div><div class="td picked">compare_optimisation Min Mass SF 1.2 (3)</div>' + cell('Split') +
  bar('4.128e-003 t', 'mass', 60, 'full') + bar('3.671e-003 t', 'mass', 60, 'full') + cell('Planar') +
  bar('1.450e+001', 'comp', 57, 'full') + cell('5000, 7500, 10000') + cell('Min Mass') + bar('3.000e+001 mm', 'thick', 75, 'full') + '<div></div></div>';
```
